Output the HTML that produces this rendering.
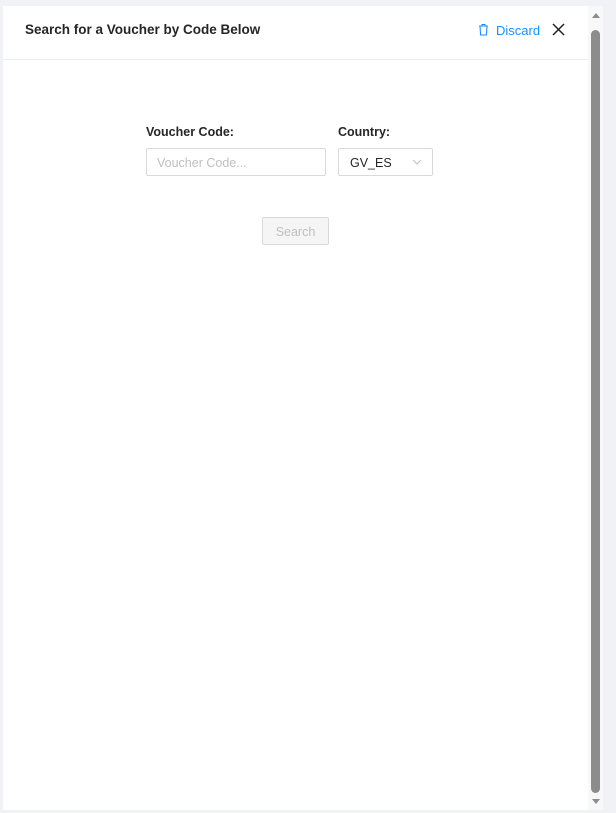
<!DOCTYPE html>
<html><head><style>
body{margin:0;width:616px;height:813px;background:#f0f2f5;font-family:"Liberation Sans",sans-serif;position:relative;overflow:hidden}
.modal{position:absolute;left:3px;top:6px;width:585px;height:804px;background:#fff}
.hdr{height:53px;border-bottom:1px solid #eceef1;position:relative}
.title{position:absolute;left:22px;top:16px;font-size:13.5px;font-weight:bold;color:#262626}
.disc{position:absolute;left:475px;top:17px;color:#1890ff;font-size:13px}
.x{position:absolute;left:549px;top:17px}
.lbl{position:absolute;font-size:12.5px;font-weight:bold;color:#262626}
.inp{position:absolute;border:1px solid #d9d9d9;border-radius:2px;background:#fff;font-size:12.5px;box-sizing:border-box}
.sb{position:absolute;left:588px;top:6px;width:15px;height:804px;background:#f8f8f8}
.thumb{position:absolute;left:591px;top:30px;width:9px;height:763px;background:#8c8c8c;border-radius:5px}
</style></head><body>
<div class="modal">
<div class="hdr">
<div class="title">Search for a Voucher by Code Below</div>
<div class="disc"><svg width="11" height="13" viewBox="0 0 11 13" style="vertical-align:-1px;margin-right:7px"><path d="M1 3h9M4 3V1.5h3V3M2 3l.6 9h5.8L9 3" fill="none" stroke="#1890ff" stroke-width="1.1"/></svg>Discard</div>
<svg class="x" width="13" height="13" viewBox="0 0 13 13"><path d="M1 1L12 12M12 1L1 12" stroke="#222" stroke-width="1.5"/></svg>
</div>
</div>
<div class="lbl" style="left:146px;top:125px">Voucher Code:</div>
<div class="lbl" style="left:338px;top:125px">Country:</div>
<div class="inp" style="left:146px;top:148px;width:180px;height:28px;color:#bfbfbf;padding:7px 10px">Voucher Code...</div>
<div class="inp" style="left:338px;top:148px;width:95px;height:28px;color:#262626;padding:7px 11px">GV_ES<svg width="10" height="6" viewBox="0 0 10 6" style="position:absolute;right:10px;top:10px"><path d="M1 1l4 4 4-4" fill="none" stroke="#bfbfbf"/></svg></div>
<div class="inp" style="left:262px;top:217px;width:67px;height:28px;background:#f5f5f5;color:#bfbfbf;padding:7px 0;text-align:center">Search</div>
<div class="sb"></div>
<div class="thumb"></div>
<svg style="position:absolute;left:592px;top:13px" width="8" height="5"><path d="M0 5L4 0 8 5z" fill="#8c8c8c"/></svg>
<svg style="position:absolute;left:592px;top:799px" width="8" height="5"><path d="M0 0L4 5 8 0z" fill="#8c8c8c"/></svg>
</body></html>
